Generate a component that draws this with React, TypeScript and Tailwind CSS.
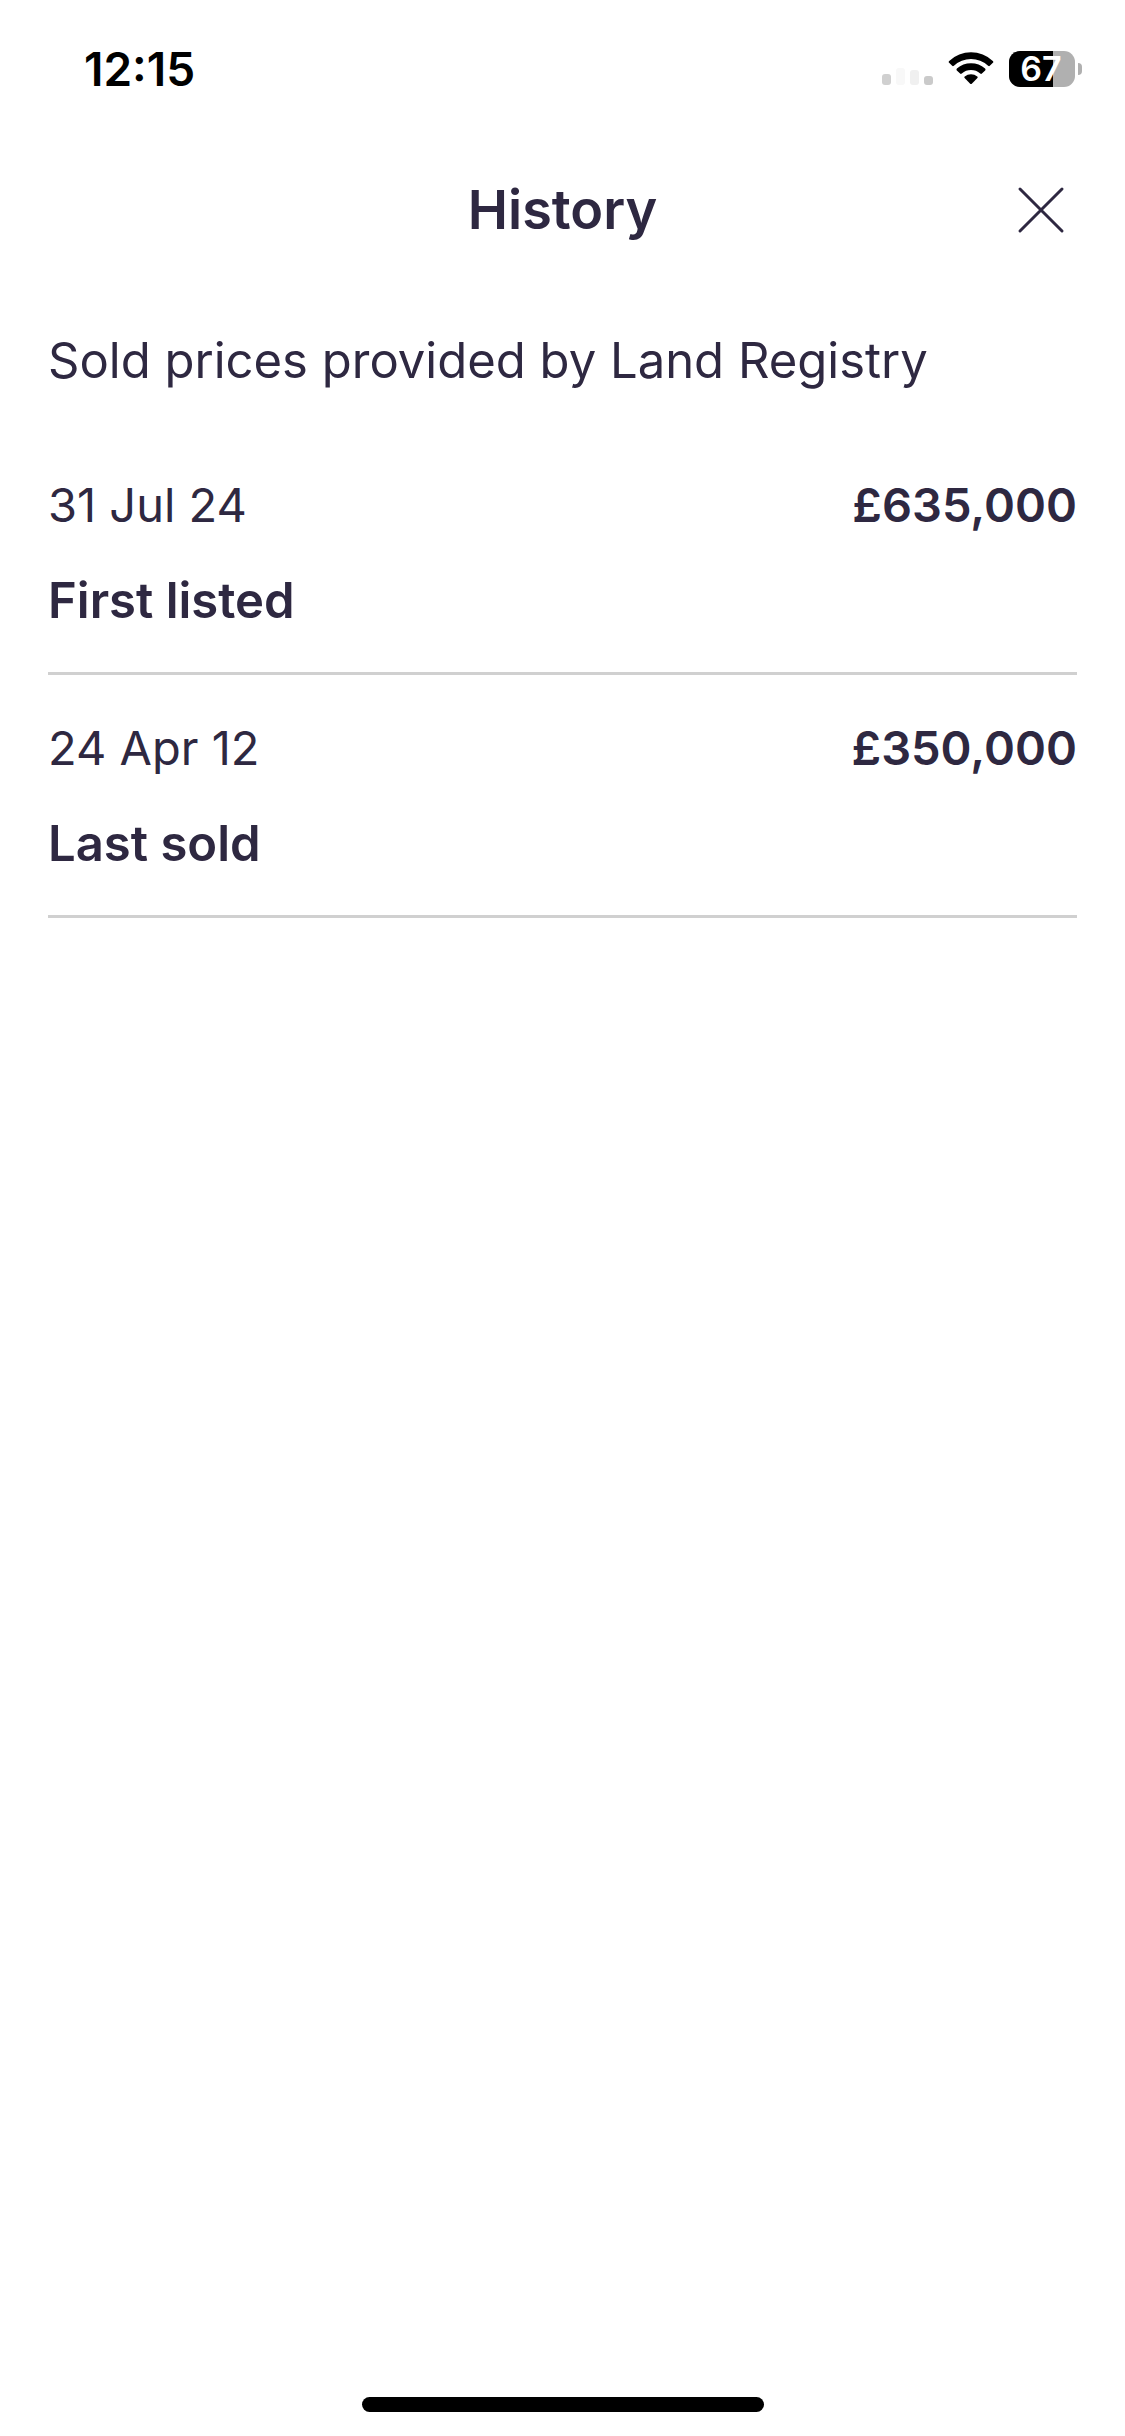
type HistoryEntry = {
  id: number;
  date: string;
  price: string;
  label: string;
};

const entries: HistoryEntry[] = [
  { id: 1, date: '31 Jul 24', price: '£635,000', label: 'First listed' },
  { id: 2, date: '24 Apr 12', price: '£350,000', label: 'Last sold' },
];

function SignalIcon() {
  return (
    <svg width="51" height="36" viewBox="0 0 51 36" aria-hidden="true">
      <rect x="0" y="23" width="9" height="11" rx="3" fill="#d0d0d0" />
      <rect x="14" y="17" width="9" height="17" rx="3" fill="#f8f8f8" />
      <rect x="28" y="19" width="9" height="15" rx="3" fill="#f0f0f0" />
      <rect x="42" y="25" width="9" height="9" rx="3" fill="#cacaca" />
    </svg>
  );
}

function WifiIcon() {
  return (
    <svg width="46" height="36" viewBox="0 0 46 36" aria-hidden="true">
      <path d="M1.2 9.9 A32 32 0 0 1 44.8 9.9 Q45.8 10.8 44.9 11.8 L41.8 14.8 Q41 15.5 40.1 14.7 A25.5 25.5 0 0 0 5.9 14.7 Q5 15.5 4.2 14.8 L1.1 11.8 Q0.2 10.8 1.2 9.9 Z" />
      <path d="M8.9 17.6 A21 21 0 0 1 37.1 17.6 Q38 18.5 37.2 19.4 L33.9 22.6 Q33.1 23.3 32.2 22.5 A14 14 0 0 0 13.8 22.5 Q12.9 23.3 12.1 22.6 L8.8 19.4 Q8 18.5 8.9 17.6 Z" />
      <path d="M16.7 25.4 A10 10 0 0 1 29.3 25.4 Q30.2 26.2 29.4 27.1 L23.8 32.7 Q23 33.4 22.2 32.7 L16.6 27.1 Q15.8 26.2 16.7 25.4 Z" />
    </svg>
  );
}

function Battery({ level }: { level: number }) {
  return (
    <div className="flex items-center gap-[3px]">
      <div className="relative flex h-9 w-[66px] items-center justify-center">
        <div className="absolute inset-0 overflow-hidden rounded-[11px] bg-[#b0b0b0]">
          <div className="h-full bg-black" style={{ width: `${level}%` }} />
        </div>
        <span className="relative pr-0.5 text-[34px] leading-9 font-semibold text-white">{level}</span>
      </div>
      <div className="h-3 w-1 rounded-r-full bg-[#b0b0b0]" />
    </div>
  );
}

function StatusBar() {
  return (
    <div className="flex h-[138px] items-center justify-between pr-[43px] pl-[84px] text-black">
      <span className="text-[46px] leading-[54px] font-semibold">12:15</span>
      <div className="flex items-center gap-[15px]">
        <SignalIcon />
        <WifiIcon />
        <Battery level={67} />
      </div>
    </div>
  );
}

function Header() {
  return (
    <header className="grid h-36 grid-cols-3 items-center px-12">
      <h1 className="col-start-2 text-center text-[54px] leading-[72px] font-semibold">History</h1>
      <button type="button" aria-label="Close" className="-mr-3 justify-self-end p-6">
        <svg width="48" height="48" viewBox="0 0 48 48" fill="none" stroke="currentColor" strokeWidth="3" strokeLinecap="round">
          <path d="M3 3 L45 45 M45 3 L3 45" />
        </svg>
      </button>
    </header>
  );
}

export default function App() {
  return (
    <div className="flex min-h-screen flex-col bg-white font-['Inter',sans-serif] text-[#2e2841]">
      <StatusBar />
      <Header />
      <main className="grow px-12 pt-[43px] text-[49px] leading-[72px]">
        <p>Sold prices provided by Land Registry</p>
        <ul className="mt-[35px]">
          {entries.map((entry) => (
            <li key={entry.id} className="border-b-[3px] border-[#d0d0d0] pt-[37px] pb-[35px]">
              <div className="flex justify-between text-[47px]">
                <span>{entry.date}</span>
                <span className="font-semibold">{entry.price}</span>
              </div>
              <p className="mt-6 font-semibold">{entry.label}</p>
            </li>
          ))}
        </ul>
      </main>
      <div className="flex justify-center pb-6">
        <div className="h-[15px] w-[402px] rounded-full bg-black" />
      </div>
    </div>
  );
}
